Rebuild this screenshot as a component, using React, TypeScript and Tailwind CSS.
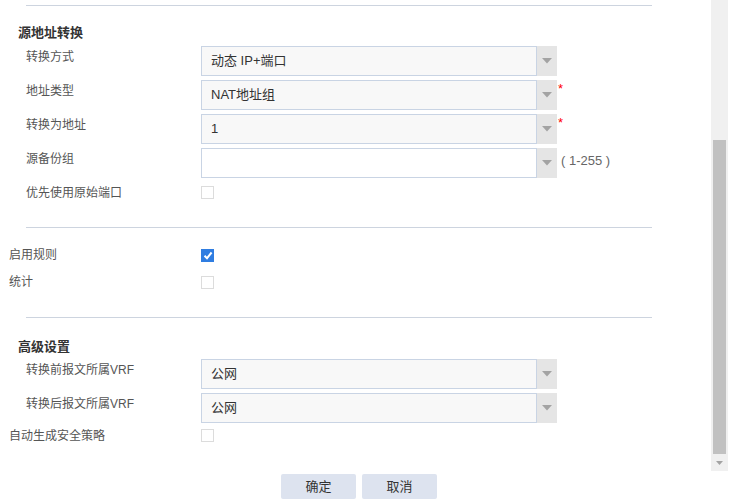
import React from 'react';

const Divider = ({ className = '' }: { className?: string }) => (
    <div className={`ml-[26px] w-[626px] h-px bg-[#cdd4df] ${className}`}></div>
);

const Arrow = () => (
    <svg width="10" height="6" viewBox="0 0 10 6">
        <path d="M0 0 H10 L5 5.5 Z" fill="#a3a3a3" />
    </svg>
);

const Select = ({ value, empty }: { value?: string; empty?: boolean }) => (
    <div className="flex h-[30px] w-[356px]">
        <div
            className={`flex-1 flex items-center pl-[9px] border border-[#c9d4e4] text-[13px] text-[#333] ${empty ? 'bg-white' : 'bg-[#f8f8f8]'}`}
        >
            {value}
        </div>
        <div className="w-[20px] bg-[#e5e5e5] flex items-center justify-center">
            <Arrow />
        </div>
    </div>
);

const Checkbox = ({ checked }: { checked?: boolean }) =>
    checked ? (
        <div className="w-[13px] h-[13px] bg-[#2f7de1] flex items-center justify-center">
            <svg width="10" height="9" viewBox="0 0 10 9">
                <path d="M1.5 4.8 L4 7.2 L8.6 1.5" stroke="white" strokeWidth="2" fill="none" />
            </svg>
        </div>
    ) : (
        <div className="w-[13px] h-[13px] border border-[#dcdcdc] bg-white"></div>
    );

const SelectRow = ({ label, value, empty, required, hint, indent = true }: {
    label: string; value?: string; empty?: boolean; required?: boolean; hint?: string; indent?: boolean;
}) => (
    <div className="flex h-[30px] mb-[4px]">
        <div className={`w-[201px] pt-[3px] leading-[16px] text-[12px] text-[#555] ${indent ? 'pl-[26px]' : 'pl-[9px]'}`}>
            {label}
        </div>
        <Select value={value} empty={empty} />
        {required && <span className="text-[#f00] text-[13px] leading-[14px] ml-[1px] mt-[2px]">*</span>}
        {hint && <span className="self-center ml-[4px] mb-[4px] text-[13px] text-[#666]">{hint}</span>}
    </div>
);

const CheckRow = ({ label, checked, indent }: { label: string; checked?: boolean; indent?: boolean }) => (
    <div className="flex items-center h-[14px]">
        <div className={`w-[201px] text-[12px] text-[#555] leading-[14px] ${indent ? 'pl-[26px]' : 'pl-[9px]'}`}>{label}</div>
        <Checkbox checked={checked} />
    </div>
);

export default function App() {
    return (
        <div
            className="w-[729px] h-[501px] bg-white flex overflow-hidden"
            style={{ fontFamily: '"Liberation Sans", "Noto Sans CJK SC", sans-serif' }}
        >
            <div className="w-[711px]">
                <Divider className="mt-[5px]" />
                <div className="pl-[18px] mt-[20px] h-[14px] leading-[14px] text-[13px] font-bold text-[#333]">源地址转换</div>
                <div className="mt-[6px]">
                    <SelectRow label="转换方式" value="动态 IP+端口" />
                    <SelectRow label="地址类型" value="NAT地址组" required />
                    <SelectRow label="转换为地址" value="1" required />
                    <SelectRow label="源备份组" empty hint="( 1-255 )" />
                </div>
                <div className="mt-[7px]">
                    <div className="flex h-[12px]">
                        <div className="w-[201px] pl-[26px] text-[12px] text-[#555] leading-[16px]">优先使用原始端口</div>
                        <div className="mt-[1px]"><Checkbox /></div>
                    </div>
                </div>
                <Divider className="mt-[30px]" />
                <div className="mt-[20px]">
                    <CheckRow label="启用规则" checked />
                </div>
                <div className="mt-[13px]">
                    <CheckRow label="统计" />
                </div>
                <Divider className="mt-[28px]" />
                <div className="pl-[18px] mt-[22px] h-[14px] leading-[14px] text-[13px] font-bold text-[#333]">高级设置</div>
                <div className="mt-[5px]">
                    <SelectRow label="转换前报文所属VRF" value="公网" />
                    <SelectRow label="转换后报文所属VRF" value="公网" />
                </div>
                <div className="mt-[4px] flex">
                    <div className="w-[201px] pl-[9px] text-[12px] text-[#555] leading-[16px] pt-[1px]">自动生成安全策略</div>
                    <div className="mt-[2px]"><Checkbox /></div>
                </div>
                <div className="mt-[30px] flex gap-[6px] pl-[281px]">
                    <button className="w-[75px] h-[25px] bg-[#dde3ef] rounded-[2px] text-[13px] text-[#333]">确定</button>
                    <button className="w-[75px] h-[25px] bg-[#dde3ef] rounded-[2px] text-[13px] text-[#333]">取消</button>
                </div>
            </div>
            <div className="w-[17px] h-[471px] bg-[#f0f0f0] flex flex-col">
                <div className="h-[140px]"></div>
                <div className="mx-[2px] h-[314px] bg-[#c1c1c1]"></div>
                <div className="flex-1 flex items-center justify-center">
                    <svg width="7" height="4" viewBox="0 0 7 4">
                        <path d="M0 0 H7 L3.5 4 Z" fill="#a3a3a3" />
                    </svg>
                </div>
            </div>
        </div>
    );
}
